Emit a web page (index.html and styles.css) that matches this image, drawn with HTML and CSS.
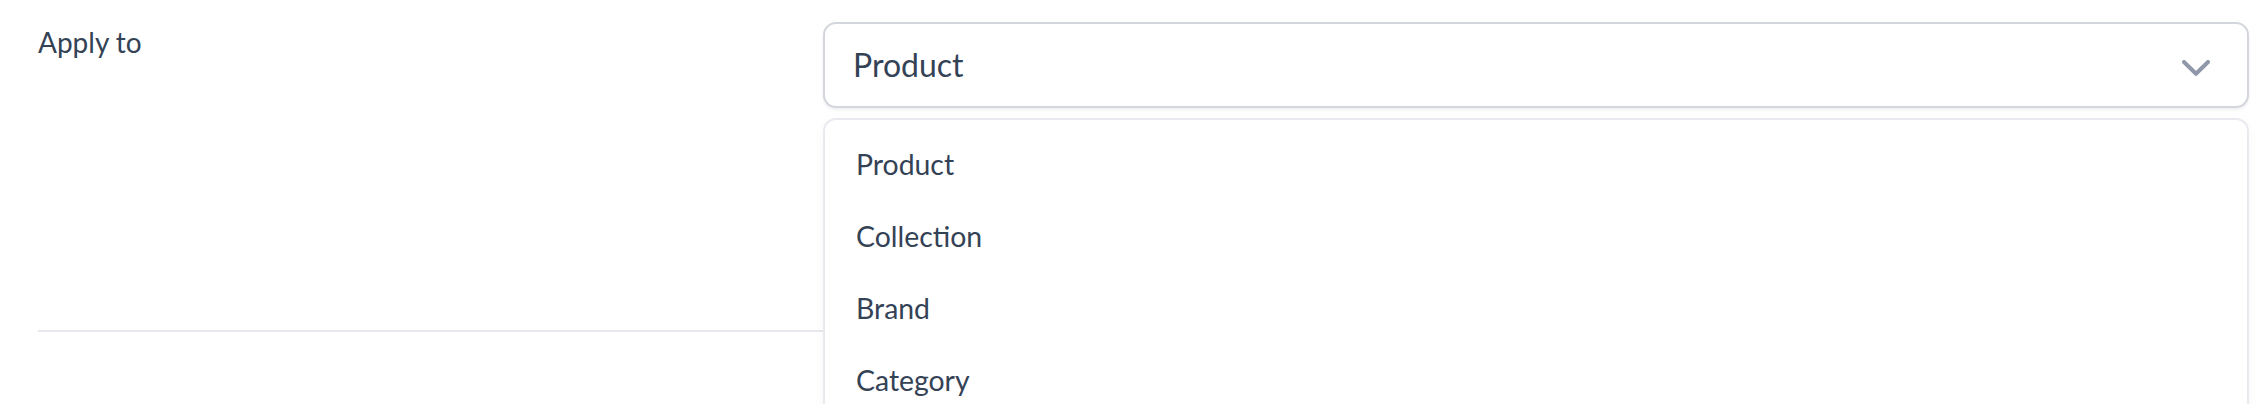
FILE: index.html
```html
<!DOCTYPE html>
<html lang="en">
<head>
<meta charset="utf-8">
<title>Apply to</title>
<link rel="stylesheet" href="styles.css">
</head>
<body>
<div class="page">
  <div class="row">
    <label class="label">Apply to</label>
    <div class="field">
      <div class="select">
        <span class="select-value">Product</span>
        <svg class="chevron" width="28" height="16" viewBox="0 0 28 16" aria-hidden="true">
          <polyline points="2,2 14,13.8 26,2" fill="none" stroke="currentColor" stroke-width="4" stroke-linecap="round" stroke-linejoin="round"/>
        </svg>
      </div>
      <ul class="menu">
        <li class="menu-item">Product</li>
        <li class="menu-item">Collection</li>
        <li class="menu-item">Brand</li>
        <li class="menu-item">Category</li>
      </ul>
    </div>
  </div>
</div>
</body>
</html>
```

FILE: styles.css
```css
html, body {
  margin: 0;
  padding: 0;
  background: #ffffff;
}

body {
  font-family: Lato, "Noto Sans", sans-serif;
  color: #344256;
}

.page {
  box-sizing: border-box;
  height: 404px;
  overflow: hidden;
  padding: 0 11px 0 38px;
}

.row {
  display: grid;
  grid-template-columns: 785px 1fr;
  padding: 22px 0 222px;
  border-bottom: 2px solid #e7e8ee;
}

.label {
  font-size: 28px;
  line-height: 40px;
  color: #344256;
}

.field {
  position: relative;
}

.select {
  box-sizing: border-box;
  height: 86px;
  display: flex;
  align-items: center;
  justify-content: space-between;
  padding: 0 37px 0 28px;
  border: 2px solid #d3d6dd;
  border-radius: 13px;
  background: #ffffff;
  box-shadow: 0 2px 3px rgba(16, 24, 40, 0.06);
}

.select-value {
  font-size: 32px;
  line-height: 40px;
  color: #344256;
}

.chevron {
  color: #8f97a8;
  margin-top: 6px;
}

.menu {
  position: absolute;
  top: 96px;
  left: 0;
  right: 0;
  margin: 0;
  padding: 8px 0;
  list-style: none;
  background: #ffffff;
  border: 2px solid #e9e9f0;
  border-radius: 13px;
  box-shadow: 0 4px 12px rgba(16, 24, 40, 0.04);
}

.menu-item {
  padding: 16px 31px;
  font-size: 28.4px;
  line-height: 40px;
  color: #344256;
}
```
